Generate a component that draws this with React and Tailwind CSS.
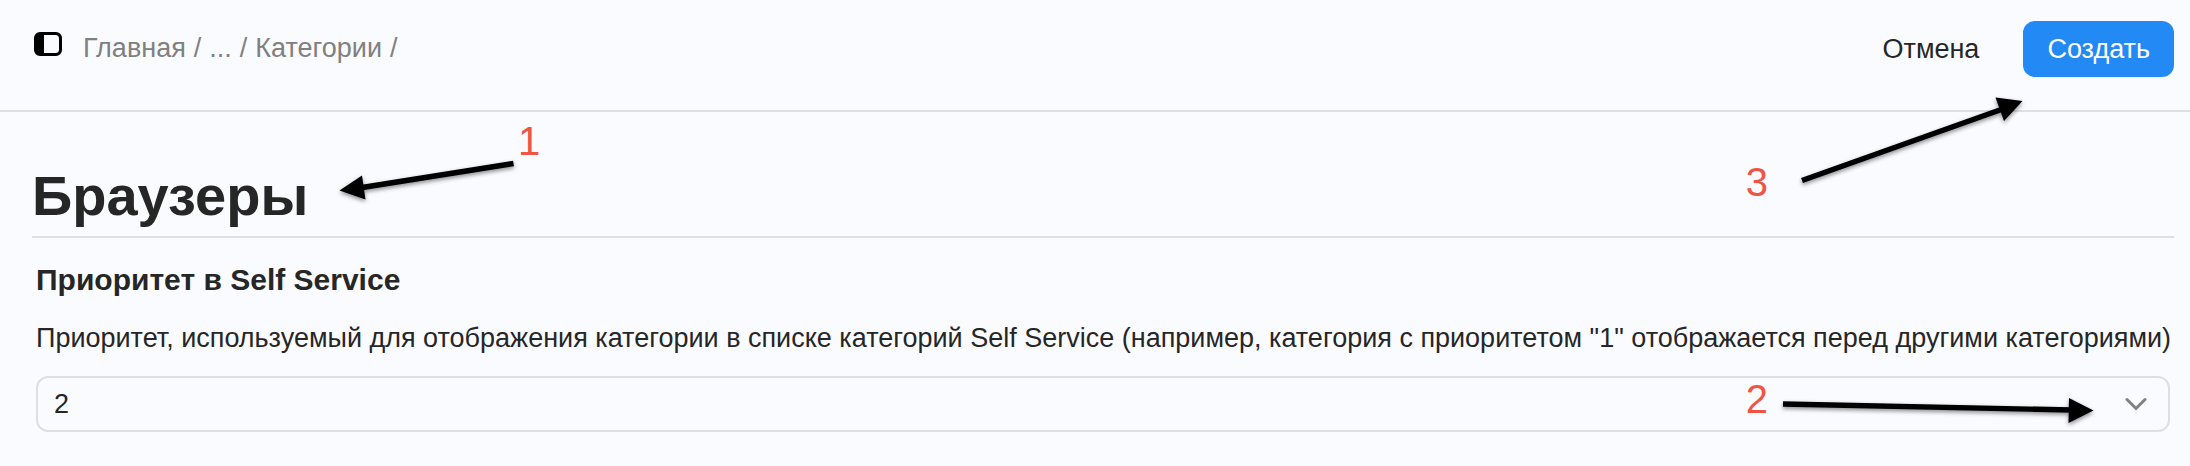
import React, { useState } from "react";

function Arrow({ className, width, height, from, to, head }) {
  return (
    <svg
      aria-hidden="true"
      width={width}
      height={height}
      viewBox={`0 0 ${width} ${height}`}
      className={`pointer-events-none absolute overflow-visible drop-shadow-[0_2px_2px_rgba(0,0,0,0.45)] ${className}`}
    >
      <line x1={from[0]} y1={from[1]} x2={to[0]} y2={to[1]} stroke="#000" strokeWidth="5.4" />
      <polygon points={head} fill="#000" />
    </svg>
  );
}

function Step({ className, children }) {
  return (
    <span className={`pointer-events-none absolute text-[40px] leading-[46px] text-[#ef5444] ${className}`}>
      {children}
    </span>
  );
}

function SidebarIcon() {
  return (
    <svg width="28" height="24" viewBox="0 0 28 24" aria-hidden="true">
      <path
        fillRule="evenodd"
        fill="#000"
        d="M6 0h16a6 6 0 0 1 6 6v12a6 6 0 0 1-6 6H6a6 6 0 0 1-6-6V6a6 6 0 0 1 6-6ZM10 3v18h11.5a3.5 3.5 0 0 0 3.5-3.5v-11A3.5 3.5 0 0 0 21.500 3Z"
      />
    </svg>
  );
}

export default function App() {
  const [priority, setPriority] = useState("2");

  return (
    <div className="relative min-h-screen bg-[#fafbff] font-['Liberation_Sans',Arial,sans-serif] text-[27px] leading-8 text-[#262626]">
      <header className="flex items-start justify-between border-b-2 border-[#dedfe3] pt-[21px] pr-4 pb-[33px] pl-[34px]">
        <div className="flex items-start pt-[11px]">
          <button type="button" aria-label="Боковая панель" className="mr-[21px] block">
            <SidebarIcon />
          </button>
          <nav aria-label="Навигация" className="flex gap-2 text-[#808080]">
            <a href="#home">Главная</a>
            <span>/</span>
            <a href="#more">...</a>
            <span>/</span>
            <a href="#categories">Категории</a>
            <span>/</span>
          </nav>
        </div>
        <div className="flex items-center">
          <button type="button" className="h-14 px-11">
            Отмена
          </button>
          <button type="button" className="h-14 rounded-xl bg-[#2389f5] px-6 text-white">
            Создать
          </button>
        </div>
      </header>

      <main className="pt-[52px] pr-4 pl-8">
        <h1 className="border-b-2 border-[#dedfe3] pb-2 text-[56px] leading-[64px] font-bold">Браузеры</h1>
        <section className="pt-6 pr-1 pl-1">
          <h2 className="text-[30px] leading-9 font-bold">Приоритет в Self Service</h2>
          <label htmlFor="priority" className="mt-6 block whitespace-nowrap">
            Приоритет, используемый для отображения категории в списке категорий Self Service (например, категория с
            приоритетом "1" отображается перед другими категориями)
          </label>
          <div className="relative mt-[22px]">
            <select
              id="priority"
              value={priority}
              onChange={(e) => setPriority(e.target.value)}
              className="block h-14 w-full appearance-none rounded-xl border-2 border-[#dedfe3] bg-transparent px-4"
            >
              <option>1</option>
              <option>2</option>
              <option>3</option>
            </select>
            <svg
              aria-hidden="true"
              width="22"
              height="14"
              viewBox="0 0 22 14"
              className="pointer-events-none absolute top-[21px] right-[23px]"
            >
              <path d="M2 2.500 11 11.500 20 2.500" fill="none" stroke="#808080" strokeWidth="3" strokeLinecap="round" />
            </svg>
          </div>
        </section>
      </main>

      <Step className="top-[118px] left-[518px]">1</Step>
      <Arrow
        className="top-[160px] left-[339px]"
        width={176}
        height={42}
        from={[174.5, 3.5]}
        to={[20, 28]}
        head="0.5,30.5 23,15.5 26.5,39.5"
      />

      <Step className="top-[159px] right-[422px]">3</Step>
      <Arrow
        className="top-[96px] right-[166px]"
        width={224}
        height={88}
        from={[2, 84.500]}
        to={[204, 12.500]}
        head="222.5,5 195.5,1.5 204,25"
      />

      <Step className="top-[376px] right-[422px]">2</Step>
      <Arrow
        className="top-[396px] right-[94px]"
        width={314}
        height={28}
        from={[1, 8]}
        to={[290, 14]}
        head="311.5,14.5 287,2 286.5,27"
      />
    </div>
  );
}
